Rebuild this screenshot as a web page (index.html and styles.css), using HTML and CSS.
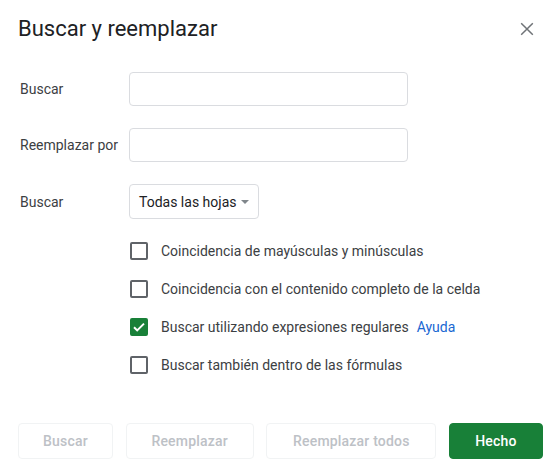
FILE: index.html
```html
<!DOCTYPE html>
<html lang="es">
<head>
<meta charset="utf-8">
<title>Buscar y reemplazar</title>
<link rel="stylesheet" href="styles.css">
</head>
<body>
<div class="dialog">
  <div class="header">
    <h1 class="title">Buscar y reemplazar</h1>
    <button class="close" aria-label="Cerrar">
      <svg width="24" height="24" viewBox="0 0 24 24"><path d="M6.2 6.2L17.8 17.8M17.8 6.2L6.2 17.8" fill="none" stroke="#6f7377" stroke-width="1.5"/></svg>
    </button>
  </div>

  <div class="form">
    <label class="label">Buscar</label>
    <input class="field" type="text">
    <label class="label">Reemplazar por</label>
    <input class="field" type="text">
    <label class="label">Buscar</label>
    <div class="select"><span>Todas las hojas</span><span class="arrow"></span></div>
  </div>

  <div class="options">
    <div class="opt"><span class="box"></span><span class="opt-text">Coincidencia de mayúsculas y minúsculas</span></div>
    <div class="opt"><span class="box"></span><span class="opt-text">Coincidencia con el contenido completo de la celda</span></div>
    <div class="opt"><span class="box checked"><svg width="18" height="18" viewBox="0 0 18 18"><path d="M4 9.2l3.2 3.2L14 5.6" fill="none" stroke="#fff" stroke-width="2"/></svg></span><span class="opt-text">Buscar utilizando expresiones regulares</span><a class="help">Ayuda</a></div>
    <div class="opt"><span class="box"></span><span class="opt-text">Buscar también dentro de las fórmulas</span></div>
  </div>

  <div class="actions">
    <button class="btn btn-find">Buscar</button>
    <button class="btn btn-replace">Reemplazar</button>
    <button class="btn btn-all">Reemplazar todos</button>
    <button class="btn btn-done">Hecho</button>
  </div>
</div>
</body>
</html>
```

FILE: styles.css
```css
html, body {
  margin: 0;
  padding: 0;
  background: #fff;
}
body {
  font-family: Roboto, "Liberation Sans", Arial, sans-serif;
  color: #3c4043;
}
.dialog {
  width: 560px;
  box-sizing: border-box;
  padding: 14px 17px 0 18px;
}
.header {
  display: flex;
  justify-content: space-between;
  align-items: center;
  height: 30px;
}
.title {
  margin: 0;
  font-size: 22px;
  font-weight: 400;
  line-height: 30px;
  color: #202124;
}
.close {
  border: 0;
  background: none;
  padding: 0;
  margin-right: 4px;
  width: 24px;
  height: 24px;
  display: flex;
}
.form {
  margin-top: 28px;
  display: grid;
  grid-template-columns: 111px auto;
  row-gap: 22px;
  align-items: center;
  justify-items: start;
}
.label {
  font-size: 14px;
  padding-left: 2px;
  color: #3c4043;
}
.field {
  width: 279px;
  height: 34px;
  box-sizing: border-box;
  border: 1px solid #dadce0;
  border-radius: 4px;
  margin: 0;
  outline: none;
}
.select {
  width: 130px;
  height: 35px;
  box-sizing: border-box;
  border: 1px solid #dadce0;
  border-radius: 4px;
  display: flex;
  align-items: center;
  justify-content: space-between;
  padding: 0 9px 0 9px;
  font-size: 14px;
  color: #202124;
}
.arrow {
  width: 0;
  height: 0;
  border-left: 4px solid transparent;
  border-right: 4px solid transparent;
  border-top: 4px solid #80868b;
}
.options {
  margin-top: 13px;
  padding-left: 112px;
}
.opt {
  height: 38px;
  display: flex;
  align-items: center;
  font-size: 14px;
}
.box {
  width: 18px;
  height: 18px;
  box-sizing: border-box;
  border: 2px solid #5f6368;
  border-radius: 2px;
  margin-right: 13px;
  flex: none;
  display: flex;
}
.box.checked {
  background: #188038;
  border-color: #188038;
}
.box.checked svg {
  margin: -2px;
}
.opt-text {
  color: #3c4043;
}
.help {
  margin-left: 8px;
  color: #1967d2;
}
.actions {
  margin-top: 39px;
  display: flex;
  justify-content: space-between;
}
.btn {
  height: 36px;
  box-sizing: border-box;
  border: 1px solid #f1f3f4;
  border-radius: 4px;
  background: #fff;
  color: #bdc1c6;
  font-family: Roboto, "Liberation Sans", Arial, sans-serif;
  font-size: 14px;
  font-weight: 500;
  letter-spacing: 0.2px;
  padding: 0;
}
.btn-find { width: 95px; }
.btn-replace { width: 128px; }
.btn-all { width: 170px; }
.btn-done {
  width: 94px;
  background: #188038;
  border-color: #188038;
  color: #fff;
}
```
